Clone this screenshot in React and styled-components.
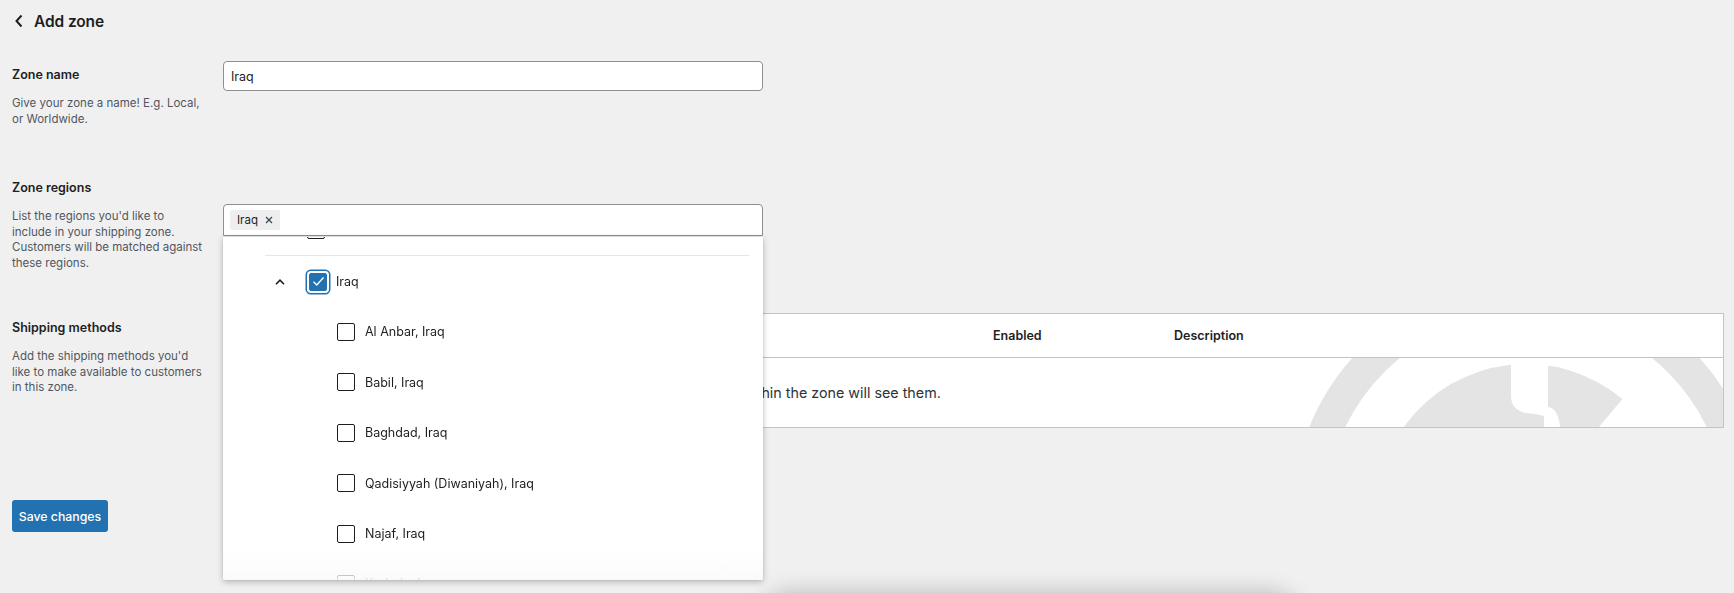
import React from 'react'
import styled, { createGlobalStyle } from 'styled-components'

const GlobalStyle = createGlobalStyle`
  html, body {
    margin: 0;
    padding: 0;
    background: #f0f0f1;
    font-family: Inter, "Noto Sans", sans-serif;
    color: #1e1e1e;
    overflow: hidden;
  }
  * { box-sizing: border-box; }
`

const Page = styled.div`
  width: 1734px;
  height: 593px;
  padding: 0 10px 0 12px;
  position: relative;
`

const Header = styled.div`
  height: 42px;
  display: flex;
  align-items: center;
  gap: 10px;
  padding-left: 2px;
  h1 {
    margin: 0;
    font-size: 15.5px;
    font-weight: 600;
    letter-spacing: -0.1px;
  }
`

const Section = styled.div`
  display: grid;
  grid-template-columns: 211px 1fr;
  align-items: start;
  margin-top: ${p => p.$top}px;
`

const Info = styled.div`
  padding-top: ${p => p.$pad}px;
  h2 {
    margin: 0;
    font-size: 12.5px;
    line-height: 18px;
    font-weight: 600;
  }
  p {
    margin: 12px 0 0;
    font-size: 11.5px;
    line-height: 15.5px;
    color: #50575e;
  }
`

const Field = styled.div`
  position: relative;
  padding-top: ${p => p.$pad || 0}px;
`

const TextInput = styled.div`
  width: 540px;
  height: 30px;
  background: #fff;
  border: 1px solid #8c8f94;
  border-radius: 4px;
  display: flex;
  align-items: center;
  padding: 0 7px;
  font-size: 12.5px;
`

const RegionBox = styled(TextInput)`
  height: 32px;
  padding: 0 6px;
  border-radius: 4px 4px 0 0;
`

const Tag = styled.span`
  display: inline-flex;
  align-items: center;
  gap: 7px;
  height: 20px;
  padding: 0 7px;
  background: #eeeeef;
  border-radius: 2px;
  font-size: 11.5px;
  svg { display: block; }
`

const Dropdown = styled.div`
  position: absolute;
  left: 0;
  top: calc(100% + 1px);
  width: 540px;
  height: 343px;
  background: #fff;
  box-shadow: 0 2px 6px rgba(0, 0, 0, 0.25), 0 0 2px rgba(0, 0, 0, 0.12);
  border-radius: 0 0 2px 2px;
  overflow: hidden;
  z-index: 5;
  &::after {
    content: '';
    position: absolute;
    left: 0;
    right: 0;
    bottom: 0;
    height: 30px;
    background: linear-gradient(rgba(255,255,255,0), rgba(250,250,250,0.9));
  }
`

const List = styled.div`
  margin-top: -32px;
  padding: 0 14px 0 42px;
`

const Country = styled.div`
  border-top: ${p => (p.$first ? 'none' : '1px solid #e6e6e6')};
`

const Row = styled.div`
  height: 50.4px;
  display: flex;
  align-items: center;
  font-size: 12.5px;
  padding-left: ${p => (p.$child ? 72 : 0)}px;
`

const Toggle = styled.span`
  width: 30px;
  display: flex;
  justify-content: center;
  margin-right: 12px;
  svg { display: block; }
`

const Box = styled.span`
  width: 18px;
  height: 18px;
  flex: none;
  border: 1.5px solid #1e1e1e;
  border-radius: 2px;
  margin-right: 10px;
  display: flex;
  align-items: center;
  justify-content: center;
  ${p => p.$checked && `
    background: #2271b1;
    border-color: #2271b1;
    box-shadow: 0 0 0 2px #fff, 0 0 0 3.5px #2271b1;
    margin-left: 2px;
    margin-right: 9px;
  `}
`

const Table = styled.div`
  background: #fff;
  border: 1px solid #c3c4c7;
`

const HeadRow = styled.div`
  display: grid;
  grid-template-columns: 745px 181px 1fr;
  height: 44px;
  align-items: center;
  border-bottom: 1px solid #c3c4c7;
  font-size: 12.5px;
  font-weight: 600;
  span { padding-left: 24px; }
`

const BodyRow = styled.div`
  position: relative;
  height: 69px;
  overflow: hidden;
  display: flex;
  align-items: center;
  padding-left: 24px;
  font-size: 14.3px;
  color: #2c3338;
`

const Watermark = styled.svg`
  position: absolute;
  left: 1062px;
  top: -84px;
  pointer-events: none;
`

const SaveButton = styled.button`
  margin-top: 72px;
  width: 96px;
  height: 32px;
  background: #2271b1;
  color: #fff;
  border: none;
  border-radius: 3px;
  font-family: inherit;
  font-size: 12.3px;
  font-weight: 500;
  padding: 0;
`

const FloorShadow = styled.div`
  position: fixed;
  left: 770px;
  top: 600px;
  width: 520px;
  height: 40px;
  border-radius: 20px;
  box-shadow: 0 0 22px 8px rgba(0, 0, 0, 0.22);
`

const Chevron = ({ up }) => (
  <svg width="10" height="6" viewBox="0 0 10 6">
    <path d={up ? 'M1 5.2L5 1.2L9 5.2' : 'M1 1L5 5L9 1'} fill="none" stroke="#1e1e1e" strokeWidth="1.6" />
  </svg>
)

const Check = () => (
  <svg width="13" height="11" viewBox="0 0 13 11">
    <path d="M1.5 5.8L4.8 9L11.5 1.5" fill="none" stroke="#fff" strokeWidth="1.4" />
  </svg>
)

const regions = [
  'Al Anbar, Iraq',
  'Babil, Iraq',
  'Baghdad, Iraq',
  'Qadisiyyah (Diwaniyah), Iraq',
  'Najaf, Iraq',
  'Karbala, Iraq',
  'Kirkuk, Iraq',
]

export default function App() {
  return (
    <Page>
      <GlobalStyle />
      <Header>
        <svg width="10" height="14" viewBox="0 0 10 14">
          <path d="M7.5 1.5L2.5 7L7.5 12.5" fill="none" stroke="#1e1e1e" strokeWidth="2" />
        </svg>
        <h1>Add zone</h1>
      </Header>

      <Section $top={19}>
        <Info $pad={5}>
          <h2>Zone name</h2>
          <p>Give your zone a name! E.g. Local,<br />or Worldwide.</p>
        </Info>
        <Field>
          <TextInput>Iraq</TextInput>
        </Field>
      </Section>

      <Section $top={52}>
        <Info $pad={0}>
          <h2>Zone regions</h2>
          <p>List the regions you'd like to<br />include in your shipping zone.<br />Customers will be matched against<br />these regions.</p>
        </Info>
        <Field $pad={25}>
          <RegionBox>
            <Tag>
              Iraq
              <svg width="8" height="8" viewBox="0 0 8 8">
                <path d="M1 1L7 7M7 1L1 7" stroke="#3c434a" strokeWidth="1.2" />
              </svg>
            </Tag>
          </RegionBox>
          <Dropdown>
            <List>
              <Country $first>
                <Row>
                  <Toggle><Chevron /></Toggle>
                  <Box />
                  Iran
                </Row>
              </Country>
              <Country>
                <Row>
                  <Toggle><Chevron up /></Toggle>
                  <Box $checked><Check /></Box>
                  Iraq
                </Row>
                {regions.map(r => (
                  <Row $child key={r}>
                    <Box />
                    {r}
                  </Row>
                ))}
              </Country>
            </List>
          </Dropdown>
        </Field>
      </Section>

      <Section $top={42}>
        <Info $pad={6}>
          <h2>Shipping methods</h2>
          <p>Add the shipping methods you'd<br />like to make available to customers<br />in this zone.</p>
        </Info>
        <Field>
          <Table>
            <HeadRow>
              <span>Title</span>
              <span>Enabled</span>
              <span>Description</span>
            </HeadRow>
            <BodyRow>
              You can add multiple shipping methods within this zone. Only customers within the zone will see them.
              <Watermark width="480" height="480" viewBox="0 0 480 480">
                <circle cx="240" cy="240" r="217" fill="none" stroke="#e4e4e5" strokeWidth="33" />
                <path d="M240 240 L336.4 125.1 A150 150 0 1 0 369.9 315 Z" fill="#e4e4e5" />
                <path d="M225 80 L262 80 L262 133 Q272 134 274 153 L276 200 L258 200 L258 142 L250 140 Q225 140 225 122 Z" fill="#fff" />
              </Watermark>
            </BodyRow>
          </Table>
        </Field>
      </Section>

      <SaveButton>Save changes</SaveButton>
      <FloorShadow />
    </Page>
  )
}
